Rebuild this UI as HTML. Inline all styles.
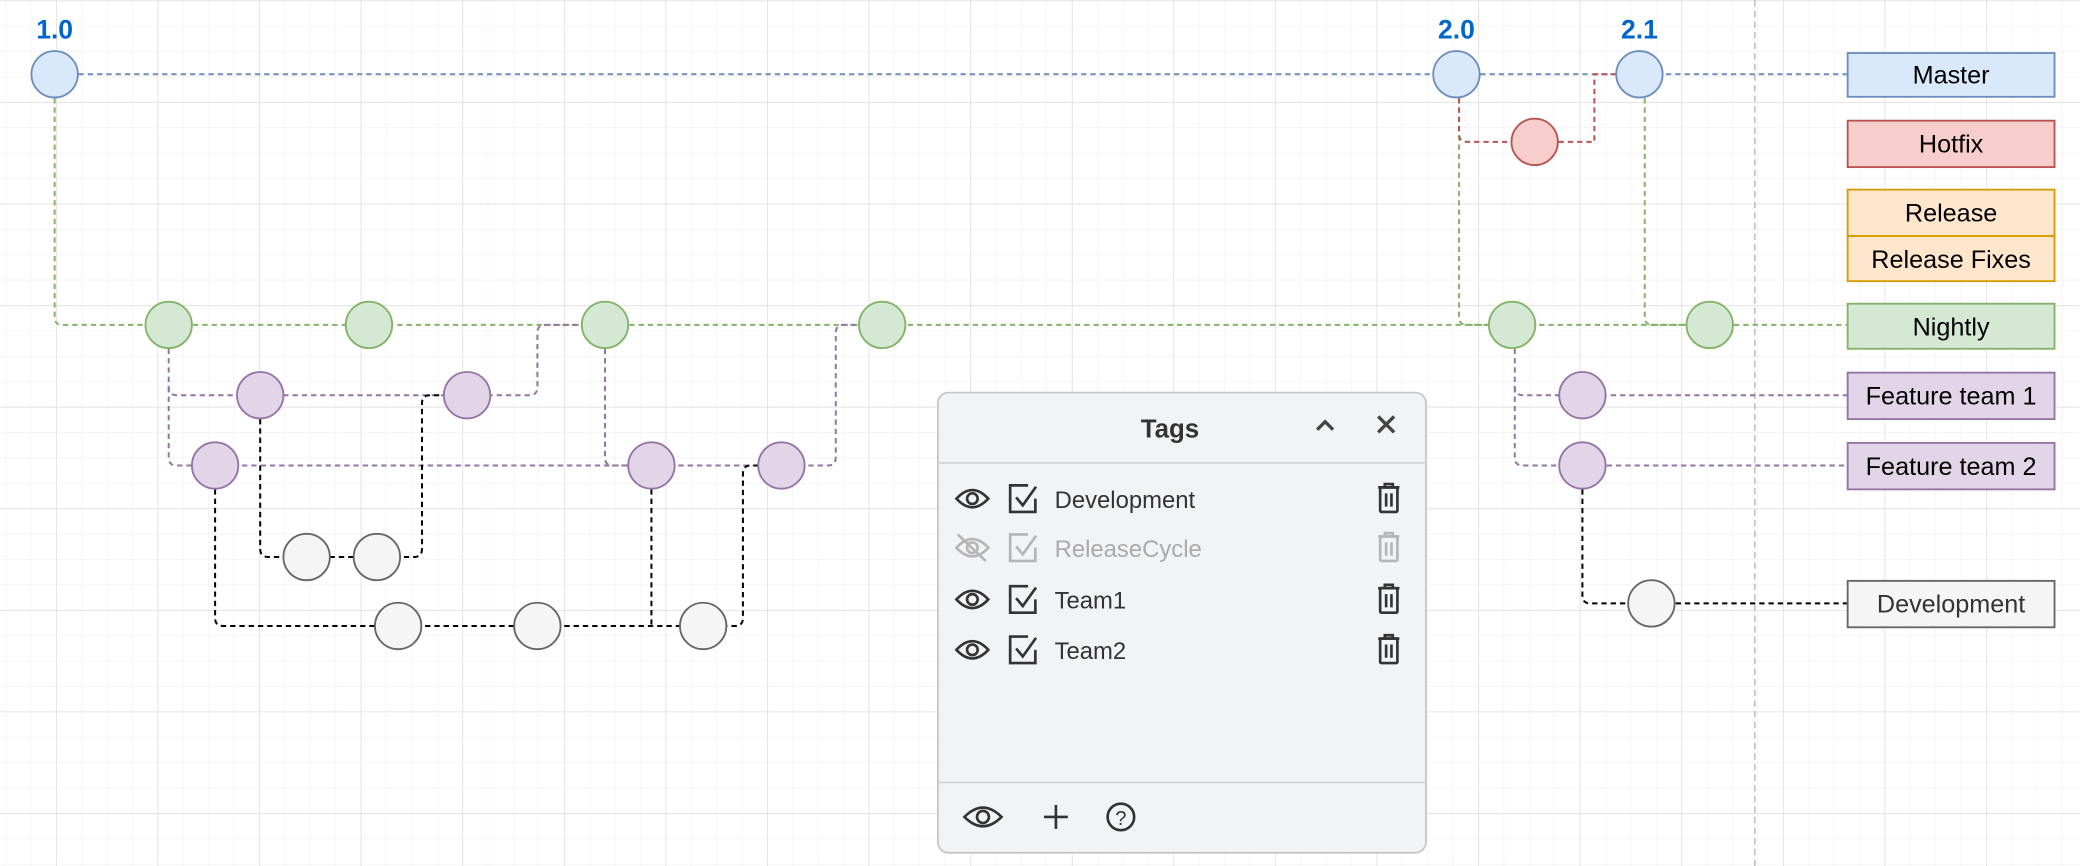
<!DOCTYPE html>
<html><head><meta charset="utf-8"><style>
html,body{margin:0;padding:0;background:#fff;}
svg{display:block;}
text{font-family:"Liberation Sans",Arial,sans-serif;}
</style></head><body>
<svg width="2080" height="866" viewBox="0 0 1568 653" xmlns="http://www.w3.org/2000/svg">
<defs>
<pattern id="gmin" x="42" y="0.3" width="19.15" height="19.15" patternUnits="userSpaceOnUse">
<path d="M0 0 H19.15 M0 0 V19.15" stroke="#eeeeee" stroke-width="0.9" fill="none"/>
</pattern>
<pattern id="gmaj" x="42" y="0.3" width="76.6" height="76.6" patternUnits="userSpaceOnUse">
<path d="M0 0 H76.6 M0 0 V76.6" stroke="#dedede" stroke-width="1.1" fill="none"/>
</pattern>
</defs>
<rect width="1568" height="653" fill="#fff"/>
<rect width="1568" height="653" fill="url(#gmin)"/>
<rect width="1568" height="653" fill="url(#gmaj)"/>
<line x1="1323" y1="0" x2="1323" y2="653" stroke="#bbb" stroke-width="1.1" stroke-dasharray="5 3"/>

<g fill="none" stroke-width="1.5" stroke-dasharray="4 3">
<path stroke="#6c8ebf" d="M59 56 H1393"/>
<path stroke="#82b366" d="M41 74 V239 Q41 245 47 245 H1393"/>
<path stroke="#82b366" d="M1100 74 V239 Q1100 245 1106 245 H1122"/>
<path stroke="#82b366" d="M1240 74 V239 Q1240 245 1246 245 H1271"/>
<path stroke="#b85450" d="M1100 74 V101 Q1100 107 1106 107 H1140"/>
<path stroke="#b85450" d="M1175 107 H1202 V56 H1219"/>
<path stroke="#9673a6" d="M127 263 V292 Q127 298 133 298 H399 Q405 298 405 292 V251 Q405 245 411 245 H438"/>
<path stroke="#9673a6" d="M127 292 V345 Q127 351 133 351 H624 Q630 351 630 345 V251 Q630 245 636 245 H648"/>
<path stroke="#9673a6" d="M456 263 V345 Q456 351 462 351 H474"/>
<path stroke="#9673a6" d="M1142 263 V292 Q1142 298 1148 298 H1393"/>
<path stroke="#9673a6" d="M1142 292 V345 Q1142 351 1148 351 H1393"/>
<path stroke="#000" d="M196 316 V414 Q196 420 202 420 H312 Q318 420 318 414 V304 Q318 298 324 298 H335"/>
<path stroke="#000" d="M162 369 V466 Q162 472 168 472 H554 Q560 472 560 466 V357 Q560 351 566 351 H572"/>
<path stroke="#000" d="M491 369 V472"/>
<path stroke="#000" d="M1193 369 V449 Q1193 455 1199 455 H1393"/>
</g>

<g stroke-width="1.4" fill="#dae8fc" stroke="#6c8ebf">
<circle cx="41" cy="56" r="17.5"/><circle cx="1098" cy="56" r="17.5"/><circle cx="1236" cy="56" r="17.5"/>
</g>
<circle cx="1157" cy="107" r="17.5" fill="#f8cecc" stroke="#b85450" stroke-width="1.4"/>
<g stroke-width="1.4" fill="#d5e8d4" stroke="#82b366">
<circle cx="127" cy="245" r="17.5"/><circle cx="278" cy="245" r="17.5"/><circle cx="456" cy="245" r="17.5"/><circle cx="665" cy="245" r="17.5"/><circle cx="1140" cy="245" r="17.5"/><circle cx="1289" cy="245" r="17.5"/>
</g>
<g stroke-width="1.4" fill="#e1d5e7" stroke="#9673a6">
<circle cx="196" cy="298" r="17.5"/><circle cx="352" cy="298" r="17.5"/><circle cx="1193" cy="298" r="17.5"/>
<circle cx="162" cy="351" r="17.5"/><circle cx="491" cy="351" r="17.5"/><circle cx="589" cy="351" r="17.5"/><circle cx="1193" cy="351" r="17.5"/>
</g>
<g stroke-width="1.4" fill="#f5f5f5" stroke="#666">
<circle cx="231" cy="420" r="17.5"/><circle cx="284" cy="420" r="17.5"/>
<circle cx="300" cy="472" r="17.5"/><circle cx="405" cy="472" r="17.5"/><circle cx="530" cy="472" r="17.5"/>
<circle cx="1245" cy="455" r="17.5"/>
</g>

<g font-weight="bold" font-size="20" fill="#0066cc" text-anchor="middle">
<text x="41" y="29">1.0</text><text x="1098" y="29">2.0</text><text x="1236" y="29">2.1</text>
</g>

<g stroke-width="1.4">
<rect x="1393" y="40" width="156" height="33" fill="#dae8fc" stroke="#6c8ebf"/>
<rect x="1393" y="91" width="156" height="35" fill="#f8cecc" stroke="#b85450"/>
<rect x="1393" y="143" width="156" height="35" fill="#ffe6cc" stroke="#d79b00"/>
<rect x="1393" y="178" width="156" height="34" fill="#ffe6cc" stroke="#d79b00"/>
<rect x="1393" y="229" width="156" height="34" fill="#d5e8d4" stroke="#82b366"/>
<rect x="1393" y="281" width="156" height="35" fill="#e1d5e7" stroke="#9673a6"/>
<rect x="1393" y="334" width="156" height="35" fill="#e1d5e7" stroke="#9673a6"/>
<rect x="1393" y="438" width="156" height="35" fill="#f5f5f5" stroke="#666"/>
</g>
<g font-size="19" text-anchor="middle" fill="#000">
<text x="1471" y="63">Master</text>
<text x="1471" y="115">Hotfix</text>
<text x="1471" y="167">Release</text>
<text x="1471" y="202">Release Fixes</text>
<text x="1471" y="253">Nightly</text>
<text x="1471" y="305">Feature team 1</text>
<text x="1471" y="358">Feature team 2</text>
<text x="1471" y="462" fill="#333">Development</text>
</g>

<rect x="707" y="296" width="368" height="347" rx="8" fill="#f2f3f5" stroke="#c4c4c4" stroke-width="1.3"/>
<line x1="707" y1="349" x2="1075" y2="349" stroke="#d2d2d2" stroke-width="1.3"/>
<line x1="707" y1="590" x2="1075" y2="590" stroke="#d2d2d2" stroke-width="1.3"/>
<text x="882" y="330" font-size="19.5" font-weight="bold" text-anchor="middle" fill="#333">Tags</text>
<path d="M993 324 L999 318 L1005 324" fill="none" stroke="#444" stroke-width="2.5"/>
<path d="M1039 314 L1051 326 M1051 314 L1039 326" fill="none" stroke="#444" stroke-width="2.5"/>

<defs>
<g id="eye" fill="none" stroke-width="2">
<path d="M-12 0 Q0 -13 12 0 Q0 13 -12 0Z"/><circle r="4"/>
</g>
<g id="chk" fill="none" stroke-width="2">
<path d="M4 -10 H-9.5 V10 H9.5 V0"/><path d="M-5 -1 L0 5 L10 -9"/>
</g>
<g id="trash" fill="none" stroke-width="2">
<path d="M-8 -8.5 H8 M-3 -8.5 V-11 H3 V-8.5"/><rect x="-6.5" y="-8.5" width="13" height="18.5" rx="1"/><path d="M-2 -4 V6 M2 -4 V6"/>
</g>
</defs>
<g stroke="#333">
<use href="#eye" x="733" y="376"/><use href="#chk" x="771" y="376"/><use href="#trash" x="1047" y="376"/>
<use href="#eye" x="733" y="452"/><use href="#chk" x="771" y="452"/><use href="#trash" x="1047" y="452"/>
<use href="#eye" x="733" y="490"/><use href="#chk" x="771" y="490"/><use href="#trash" x="1047" y="490"/>
</g>
<g stroke="#b5b5b5">
<use href="#eye" x="733" y="413"/><path d="M722 403 L743 423" stroke-width="2"/><use href="#chk" x="771" y="413"/><use href="#trash" x="1047" y="413"/>
</g>
<g font-size="18" fill="#333">
<text x="795" y="383">Development</text>
<text x="795" y="420" fill="#aaa">ReleaseCycle</text>
<text x="795" y="459">Team1</text>
<text x="795" y="497">Team2</text>
</g>
<g stroke="#333" fill="none" stroke-width="2">
<path d="M727 616 Q741 602 755 616 Q741 630 727 616Z"/><circle cx="741" cy="616" r="4.5"/>
<path d="M787 616 H805 M796 607 V625"/>
<circle cx="845" cy="616" r="10"/>
</g>
<text x="845" y="622" font-size="15" text-anchor="middle" fill="#333">?</text>
</svg>
</body></html>
